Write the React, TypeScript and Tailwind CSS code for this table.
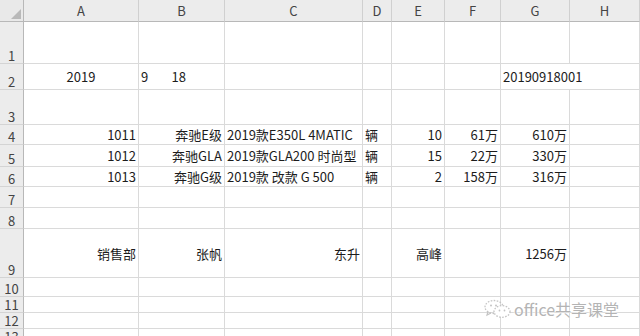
import React from "react";

type Cell = { t: string; a?: "l" | "r" | "c"; clip?: boolean; nb?: boolean };
type Row = { h: string; label: string; v: "b" | "c"; cells: (Cell | null)[] };

const letters = ["A", "B", "C", "D", "E", "F", "G", "H"];

const E: null = null;
const empty = [E, E, E, E, E, E, E, E];

const rows: Row[] = [
  { h: "h-[42px]", label: "1", v: "b", cells: empty },
  {
    h: "h-[26px]",
    label: "2",
    v: "c",
    cells: [
      { t: "2019", a: "c" },
      { t: "9\u00a0\u00a0\u00a0\u00a0\u00a0\u00a0\u00a0\u00a018", a: "l" },
      E,
      E,
      E,
      E,
      { t: "20190918001", a: "l", nb: true },
      E,
    ],
  },
  { h: "h-[35px]", label: "3", v: "b", cells: empty },
  {
    h: "h-[20px]",
    label: "4",
    v: "c",
    cells: [
      { t: "1011", a: "r" },
      { t: "奔驰E级", a: "r" },
      { t: "2019款E350L 4MATIC", a: "l", clip: true },
      { t: "辆", a: "l" },
      { t: "10", a: "r" },
      { t: "61万", a: "r" },
      { t: "610万", a: "r" },
      E,
    ],
  },
  {
    h: "h-[22px]",
    label: "5",
    v: "c",
    cells: [
      { t: "1012", a: "r" },
      { t: "奔驰GLA", a: "r" },
      { t: "2019款GLA200 时尚型", a: "l", clip: true },
      { t: "辆", a: "l" },
      { t: "15", a: "r" },
      { t: "22万", a: "r" },
      { t: "330万", a: "r" },
      E,
    ],
  },
  {
    h: "h-[20px]",
    label: "6",
    v: "c",
    cells: [
      { t: "1013", a: "r" },
      { t: "奔驰G级", a: "r" },
      { t: "2019款 改款 G 500", a: "l", clip: true },
      { t: "辆", a: "l" },
      { t: "2", a: "r" },
      { t: "158万", a: "r" },
      { t: "316万", a: "r" },
      E,
    ],
  },
  { h: "h-[21px]", label: "7", v: "b", cells: empty },
  { h: "h-[21px]", label: "8", v: "b", cells: empty },
  {
    h: "h-[49px]",
    label: "9",
    v: "c",
    cells: [
      { t: "销售部", a: "r" },
      { t: "张帆", a: "r" },
      { t: "东升", a: "r" },
      E,
      { t: "高峰", a: "r" },
      E,
      { t: "1256万", a: "r" },
      E,
    ],
  },
  { h: "h-[19px]", label: "10", v: "b", cells: empty },
  { h: "h-[16px]", label: "11", v: "b", cells: empty },
  { h: "h-[16px]", label: "12", v: "b", cells: empty },
  { h: "h-[16px]", label: "13", v: "b", cells: empty },
];

function WeChatIcon() {
  return (
    <svg width="30" height="20" viewBox="0 0 30 20" fill="none">
      <ellipse cx="11" cy="8" rx="9" ry="6.5" stroke="#c4c4c4" strokeWidth="1.3" strokeDasharray="1.6 1.4" />
      <ellipse cx="19" cy="12.5" rx="8" ry="5.8" stroke="#c4c4c4" strokeWidth="1.3" strokeDasharray="1.6 1.4" fill="#ffffff" />
      <circle cx="8" cy="6.5" r="1" fill="#c4c4c4" />
      <circle cx="13" cy="6.5" r="1" fill="#c4c4c4" />
      <circle cx="16.5" cy="11.5" r="0.9" fill="#c4c4c4" />
      <circle cx="21.5" cy="11.5" r="0.9" fill="#c4c4c4" />
      <path d="M5 12.5 L4 16 L8 14" stroke="#c4c4c4" strokeWidth="1.2" />
    </svg>
  );
}

export default function App() {
  return (
    <div className="relative w-[640px] h-[336px] overflow-hidden bg-white text-[13px] text-[#1c1c1c] font-['Noto_Sans_CJK_SC','Liberation_Sans',sans-serif]">
      <div className="grid grid-cols-[24px_115px_86px_138px_29px_53px_56px_69px_70px]">
        <div className="h-[22px] bg-[#e9e9e9] border-r border-b border-[#b8b8b8] flex items-end justify-end pr-[2px] pb-[2px]">
          <svg width="10" height="10" viewBox="0 0 10 10">
            <path d="M10 0 L10 10 L0 10 Z" fill="#b9b9b9" />
          </svg>
        </div>
        {letters.map((l) => (
          <div
            key={l}
            className="h-[22px] bg-[#ececec] border-r border-b border-r-[#d0d0d0] border-b-[#b8b8b8] flex items-center justify-center text-[#444] leading-none"
          >
            {l}
          </div>
        ))}
        {rows.map((r) => (
          <React.Fragment key={r.label}>
            <div
              className={`${r.h} bg-[#ececec] border-r border-b border-r-[#b8b8b8] border-b-[#d4d4d4] flex items-end justify-center text-[#444] leading-[12px] pb-[1px]`}
            >
              {r.label}
            </div>
            {r.cells.map((c, i) => {
              const align =
                c?.a === "r" ? "justify-end pr-[2px]" : c?.a === "c" ? "justify-center" : "justify-start pl-[2px]";
              const vert = r.v === "c" ? "items-center" : "items-end pb-[2px]";
              return (
                <div
                  key={i}
                  className={`${r.h} flex ${vert} ${align} border-b border-[#dadada] whitespace-nowrap leading-none ${
                    c?.nb ? "relative z-10" : "border-r"
                  } ${c?.clip ? "overflow-hidden" : "overflow-visible"}`}
                >
                  {c ? c.t : null}
                </div>
              );
            })}
          </React.Fragment>
        ))}
      </div>
      <div className="absolute left-[483px] top-[299px] flex items-center gap-[1px]">
        <WeChatIcon />
        <span className="text-[16px] leading-none text-[#b4b4b4] [text-shadow:0_0_2px_#fff,0_0_2px_#fff]">
          office共享课堂
        </span>
      </div>
    </div>
  );
}
